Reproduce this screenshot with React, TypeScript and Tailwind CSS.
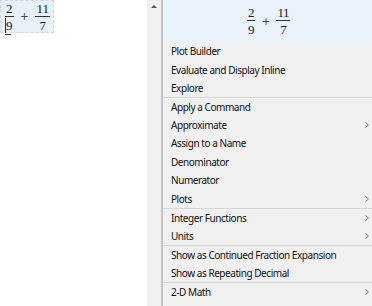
type Item = { label: string; sub?: boolean; sepBefore?: boolean };

const items: Item[] = [
  { label: "Plot Builder" },
  { label: "Evaluate and Display Inline" },
  { label: "Explore" },
  { label: "Apply a Command", sepBefore: true },
  { label: "Approximate", sub: true },
  { label: "Assign to a Name" },
  { label: "Denominator" },
  { label: "Numerator" },
  { label: "Plots", sub: true },
  { label: "Integer Functions", sub: true, sepBefore: true },
  { label: "Units", sub: true },
  { label: "Show as Continued Fraction Expansion", sepBefore: true },
  { label: "Show as Repeating Decimal" },
  { label: "2-D Math", sub: true, sepBefore: true },
];

function Frac({ n, d, cursor }: { n: string; d: string; cursor?: boolean }) {
  return (
    <span className="inline-flex flex-col items-center leading-none">
      <span className="px-[1px] pb-[1px]">{n}</span>
      <span className="h-px w-full bg-[#333]" />
      <span className="relative px-[1px] pt-[2px]">
        {d}
        {cursor && (
          <>
            <span className="absolute left-0 top-[1px] h-[15px] w-px bg-[#333]" />
            <span className="absolute left-0 bottom-[-3px] h-px w-[6px] bg-[#333]" />
          </>
        )}
      </span>
    </span>
  );
}

function Expr({ cursor }: { cursor?: boolean }) {
  return (
    <span className="inline-flex items-center gap-[7px] text-[13px] text-[#222] [font-family:'Liberation_Serif',serif]">
      <Frac n="2" d="9" cursor={cursor} />
      <span className="text-[14px]">+</span>
      <Frac n="11" d="7" />
    </span>
  );
}

export default function App() {
  return (
    <div className="flex h-[306px] w-[372px] overflow-hidden bg-white">
      {/* document side */}
      <div className="w-[147px] shrink-0">
        <div className="flex h-[33px] w-[54px] items-center justify-center border border-dashed border-[#c9d6e3] bg-[#e8f0f8] pl-[1px]">
          <Expr cursor />
        </div>
      </div>

      {/* scroll gutter */}
      <div className="flex w-[14px] shrink-0 justify-center bg-[#f0f0f0] pt-[5px]">
        <span className="h-0 w-0 border-x-[3px] border-b-[3px] border-x-transparent border-b-[#555]" />
      </div>
      <div className="w-[2px] shrink-0 bg-[#c4c4c4]" />

      {/* context menu */}
      <div className="flex flex-1 flex-col bg-[#f0f0f0] text-[10px] tracking-[-0.45px] text-[#111] [font-family:'Noto_Sans',sans-serif]">
        <div className="flex h-[42px] items-center justify-center bg-[#e9f1f9] pl-[2px]">
          <Expr />
        </div>
        {items.map((it) => (
          <div
            key={it.label}
            className={`flex h-[18.46px] items-center justify-between whitespace-nowrap pl-[8px] pr-[3px] ${
              it.sepBefore ? "border-t border-[#d7d7d7]" : ""
            }`}
          >
            <span className="pt-px">{it.label}</span>
            {it.sub && (
              <svg width="4" height="6" viewBox="0 0 4 6" className="text-[#777]">
                <path d="M0.5 0.5 L3.5 3 L0.5 5.5" fill="none" stroke="currentColor" strokeWidth="1" />
              </svg>
            )}
          </div>
        ))}
      </div>
    </div>
  );
}
